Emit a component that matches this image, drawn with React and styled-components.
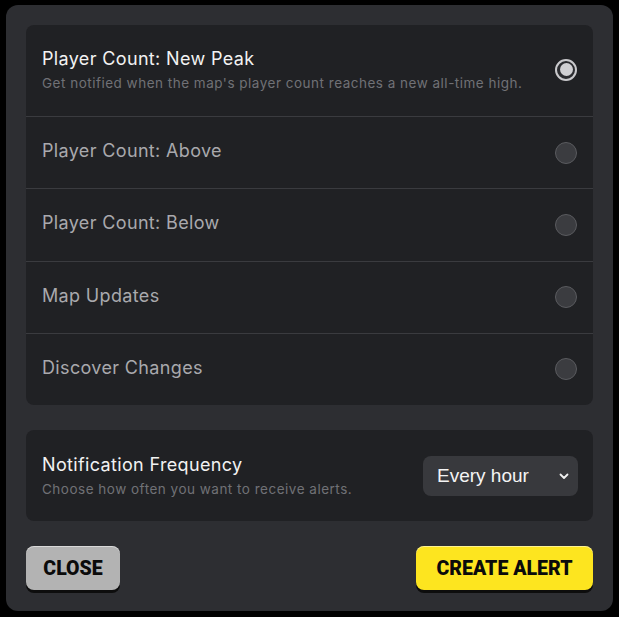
import React from "react"
import styled, { createGlobalStyle } from "styled-components"

const GlobalStyle = createGlobalStyle`
  html, body {
    margin: 0;
    background: #000;
    font-family: Inter, "Noto Sans", sans-serif;
  }
`

const Panel = styled.div`
  margin: 5px 6px 0 6px;
  width: 607px;
  height: 606px;
  box-sizing: border-box;
  background: #2d2e32;
  border-radius: 12px;
  padding: 20px 20px 0 20px;
  display: flex;
  flex-direction: column;
`

const Card = styled.div`
  background: #202124;
  border-radius: 8px;
  display: flex;
  flex-direction: column;
`

const Row = styled.div`
  display: flex;
  align-items: center;
  justify-content: space-between;
  box-sizing: border-box;
  height: ${(p) => (p.tall ? "91px" : "72.25px")};
  padding: ${(p) => (p.tall ? "0 16px 2px 16px" : "0 16px 0 16px")};
  border-top: ${(p) => (p.first ? "none" : "1px solid #3a3b3f")};
`

const Text = styled.div`
  display: flex;
  flex-direction: column;
  gap: 5px;
  margin-top: ${(p) => (p.single ? "-3px" : "0")};
`

const Title = styled.div`
  font-size: 18px;
  letter-spacing: 0.35px;
  color: ${(p) => (p.active ? "#f2f2f2" : "#a9a9ad")};
  line-height: 22px;
`

const Desc = styled.div`
  font-size: 13.5px;
  letter-spacing: 0.5px;
  color: #707176;
  line-height: 16px;
`

const Radio = styled.div`
  width: 22px;
  height: 22px;
  border-radius: 50%;
  box-sizing: border-box;
  flex-shrink: 0;
  ${(p) =>
    p.checked
      ? `border: 2px solid #c9c9cc; background: #2b2c30; display:flex; align-items:center; justify-content:center;
         &::after { content: ""; width: 13px; height: 13px; border-radius: 50%; background: #d0d0d3; }`
      : `border: 1px solid #5a5b5f; background: #3b3c40;`}
`

const FreqCard = styled(Card)`
  margin-top: 25px;
  height: 91px;
  flex-direction: row;
  align-items: center;
  justify-content: space-between;
  padding: 0 15px 0 16px;
`

const Select = styled.div`
  width: 155px;
  height: 40px;
  box-sizing: border-box;
  background: #38393d;
  border-radius: 8px;
  display: flex;
  align-items: center;
  justify-content: space-between;
  padding: 0 8px 0 14px;
  color: #f4f4f4;
  font-family: "Liberation Sans", Arial, sans-serif;
  font-size: 19px;
`

const Footer = styled.div`
  margin-top: 25px;
  display: flex;
  justify-content: space-between;
`

const Button = styled.button`
  width: ${(p) => (p.primary ? 177 : 94)}px;
  height: 44px;
  border: none;
  border-radius: 8px;
  padding: 0;
  background: ${(p) => (p.primary ? "#fde51f" : "#b3b3b3")};
  box-shadow: 0 3px 0 #0d0d0d, inset 0 1px 0 rgba(255,255,255,0.5);
  font-family: Roboto, "Liberation Sans", sans-serif;
  font-weight: 900;
  font-size: 19.5px;
  color: #0b0b0b;
`

const alerts = [
  { title: "Player Count: New Peak", desc: "Get notified when the map's player count reaches a new all-time high.", checked: true },
  { title: "Player Count: Above" },
  { title: "Player Count: Below" },
  { title: "Map Updates" },
  { title: "Discover Changes" },
]

const App = () => (
  <>
    <GlobalStyle />
    <Panel>
      <Card>
        {alerts.map((a, i) => (
          <Row key={a.title} first={i === 0} tall={!!a.desc}>
            <Text single={!a.desc}>
              <Title active={a.checked}>{a.title}</Title>
              {a.desc && <Desc>{a.desc}</Desc>}
            </Text>
            <Radio checked={a.checked} />
          </Row>
        ))}
      </Card>
      <FreqCard>
        <Text>
          <Title active>Notification Frequency</Title>
          <Desc>Choose how often you want to receive alerts.</Desc>
        </Text>
        <Select>
          Every hour
          <svg width="12" height="12" viewBox="0 0 12 12">
            <path d="M2.5 4.5 L6 8 L9.5 4.5" fill="none" stroke="#f0f0f0" strokeWidth="1.8" strokeLinecap="round" strokeLinejoin="round" />
          </svg>
        </Select>
      </FreqCard>
      <Footer>
        <Button>CLOSE</Button>
        <Button primary>CREATE ALERT</Button>
      </Footer>
    </Panel>
  </>
)

export default App
